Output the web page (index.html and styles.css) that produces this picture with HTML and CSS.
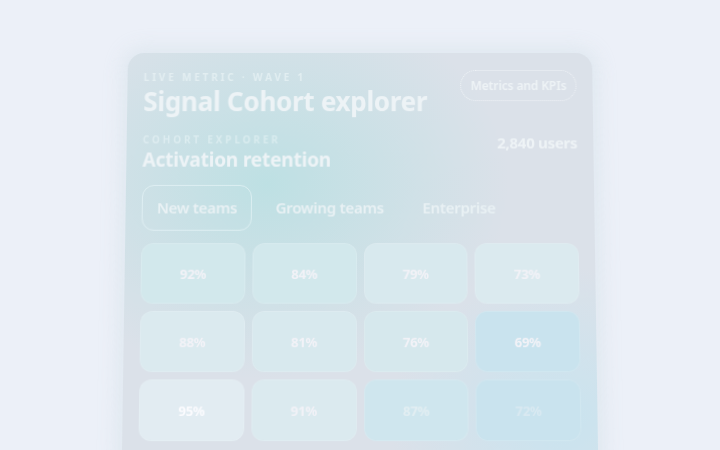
FILE: index.html
```html
<!DOCTYPE html>
<html lang="en">
<head>
<meta charset="utf-8">
<title>Signal Cohort explorer</title>
<link rel="stylesheet" href="styles.css">
</head>
<body>
<main class="stage">
  <section class="card">
    <header class="head">
      <div class="head-text">
        <div class="eyebrow">LIVE METRIC · WAVE 1</div>
        <h1 class="title">Signal Cohort explorer</h1>
      </div>
      <span class="pill">Metrics and KPIs</span>
    </header>
    <div class="sub">
      <div>
        <div class="eyebrow eyebrow-sub">COHORT EXPLORER</div>
        <h2 class="subtitle">Activation retention</h2>
      </div>
      <div class="count">2,840 users</div>
    </div>
    <nav class="tabs">
      <span class="tab tab-active">New teams</span>
      <span class="tab">Growing teams</span>
      <span class="tab">Enterprise</span>
    </nav>
    <div class="grid">
      <div class="tile t1">92%</div>
      <div class="tile t1">84%</div>
      <div class="tile t2">79%</div>
      <div class="tile t3">73%</div>
      <div class="tile t3">88%</div>
      <div class="tile t2">81%</div>
      <div class="tile t4">76%</div>
      <div class="tile t5">69%</div>
      <div class="tile t6 bright">95%</div>
      <div class="tile t3">91%</div>
      <div class="tile t7 dim">87%</div>
      <div class="tile t5 faint">72%</div>
    </div>
  </section>
</main>
</body>
</html>
```

FILE: styles.css
```css
* { box-sizing: border-box; }
html, body { margin: 0; padding: 0; }
body {
  width: 720px;
  height: 450px;
  overflow: hidden;
  background: #ecf0f8;
  font-family: "Noto Sans", "Open Sans", sans-serif;
}
.stage {
  padding-top: 53px;
  display: flex;
  justify-content: center;
}
.card {
  width: 464px;
  height: 420px;
  border-radius: 16px;
  padding: 16px 16px;
  background:
    radial-gradient(ellipse 240px 190px at 140px 130px, rgba(188, 224, 227, 0.95), rgba(188, 224, 227, 0) 100%),
    radial-gradient(ellipse 170px 150px at 430px 360px, rgba(198, 228, 240, 0.85), rgba(198, 228, 240, 0) 100%),
    #dbe1e9;
  box-shadow: 0 0 18px 6px rgba(220, 230, 238, 0.8);
  transform-origin: 50% 0;
  transform: perspective(800px) rotateX(3deg);
  color: #eef3f6;
}
.head {
  display: flex;
  justify-content: space-between;
  align-items: flex-start;
}
.eyebrow {
  font-size: 10px;
  font-weight: 700;
  letter-spacing: 2.8px;
  color: rgba(238, 247, 249, 0.6);
  line-height: 13px;
  margin-top: 2px;
  margin-bottom: 3px;
}
.title {
  margin: 0;
  font-size: 26px;
  font-weight: 700;
  letter-spacing: -0.012em;
  line-height: 28px;
  color: #edf3f6;
}
.pill {
  margin-top: 1px;
  padding: 7px 9px;
  font-size: 12px;
  font-weight: 600;
  letter-spacing: -0.01em;
  border: 1px dotted rgba(245, 248, 250, 0.8);
  border-radius: 999px;
  color: #eef3f6;
  line-height: 15px;
}
.sub {
  margin-top: 18px;
  display: flex;
  justify-content: space-between;
  align-items: flex-start;
}
.eyebrow-sub {
  margin-top: 0;
  margin-bottom: 1px;
  color: rgba(238, 247, 249, 0.5);
}
.subtitle {
  margin: 0;
  font-size: 19px;
  font-weight: 700;
  letter-spacing: -0.012em;
  line-height: 24px;
  color: #edf3f6;
}
.count {
  margin-top: -1px;
  font-size: 15px;
  font-weight: 700;
  letter-spacing: -0.02em;
  color: #eef3f6;
}
.tabs {
  margin-top: 13px;
  display: flex;
  gap: 8px;
  align-items: center;
}
.tab {
  font-size: 15px;
  font-weight: 600;
  letter-spacing: -0.02em;
  color: #e9f1f4;
  padding: 11px 14px;
  line-height: 21px;
  border: 1px solid transparent;
  border-radius: 12px;
}
.tab-active {
  border-color: rgba(230, 243, 246, 0.7);
}
.grid {
  margin-top: 12px;
  display: grid;
  grid-template-columns: repeat(4, 1fr);
  gap: 7px 7px;
}
.tile {
  height: 59px;
  border-radius: 12px;
  display: flex;
  align-items: center;
  justify-content: center;
  font-size: 13px;
  font-weight: 700;
  letter-spacing: -0.02em;
  color: #f2f2f7;
  border: 1px solid rgba(235, 244, 247, 0.25);
}
.t1 { background: #d2e8ec; }
.t2 { background: #d8e9ee; }
.t3 { background: #dbeaef; }
.t4 { background: #d6e8ed; }
.t5 { background: #c9e3ee; }
.t6 { background: #e2ecf2; }
.t7 { background: #cfe6ee; }
.bright { color: #fbfbfe; }
.dim { color: #e2eef2; }
.faint { color: #d9e9f1; }
```
